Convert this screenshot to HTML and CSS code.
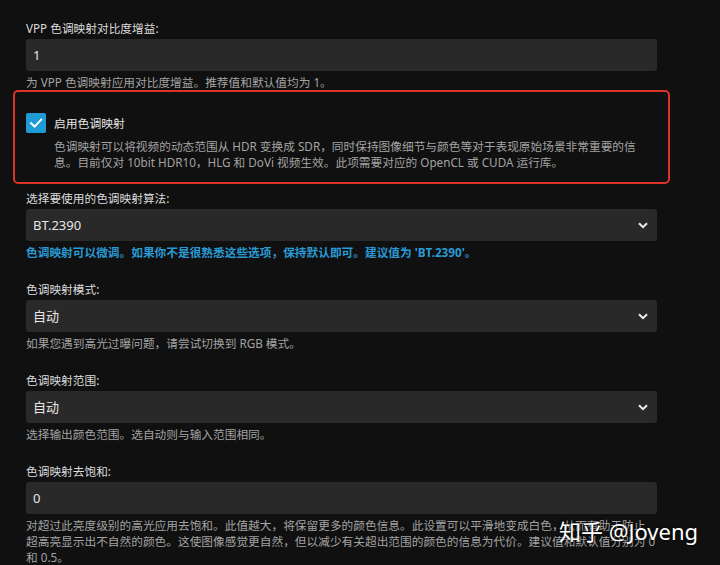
FILE: index.html
```html
<!DOCTYPE html>
<html lang="zh-CN">
<head>
<meta charset="utf-8">
<title>色调映射设置</title>
<link rel="stylesheet" href="styles.css">
</head>
<body>
<div class="page">
  <div class="field">
    <label class="label">VPP 色调映射对比度增益:</label>
    <div class="control">1</div>
    <div class="help">为 VPP 色调映射应用对比度增益。推荐值和默认值均为 1。</div>
  </div>

  <div class="highlight">
    <div class="check-row">
      <span class="checkbox">
        <svg viewBox="0 0 20 20" width="20" height="20"><path d="M5 10.2 L8.6 13.6 L15.2 6.6" fill="none" stroke="#fff" stroke-width="2" stroke-linecap="square"/></svg>
      </span>
      <span class="check-label">启用色调映射</span>
    </div>
    <div class="check-desc">色调映射可以将视频的动态范围从 HDR 变换成 SDR，同时保持图像细节与颜色等对于表现原始场景非常重要的信息。目前仅对 10bit HDR10，HLG 和 DoVi 视频生效。此项需要对应的 OpenCL 或 CUDA 运行库。</div>
  </div>

  <div class="field field-after-box">
    <label class="label">选择要使用的色调映射算法:</label>
    <div class="control select">BT.2390<svg class="chev" viewBox="0 0 10 7" width="10" height="7"><path d="M1 1.2 L5 5.2 L9 1.2" fill="none" stroke="#ececec" stroke-width="2"/></svg></div>
    <div class="help help-blue">色调映射可以微调。如果你不是很熟悉这些选项，保持默认即可。建议值为 'BT.2390'。</div>
  </div>

  <div class="field">
    <label class="label">色调映射模式:</label>
    <div class="control select">自动<svg class="chev" viewBox="0 0 10 7" width="10" height="7"><path d="M1 1.2 L5 5.2 L9 1.2" fill="none" stroke="#ececec" stroke-width="2"/></svg></div>
    <div class="help">如果您遇到高光过曝问题，请尝试切换到 RGB 模式。</div>
  </div>

  <div class="field">
    <label class="label">色调映射范围:</label>
    <div class="control select">自动<svg class="chev" viewBox="0 0 10 7" width="10" height="7"><path d="M1 1.2 L5 5.2 L9 1.2" fill="none" stroke="#ececec" stroke-width="2"/></svg></div>
    <div class="help">选择输出颜色范围。选自动则与输入范围相同。</div>
  </div>

  <div class="field">
    <label class="label">色调映射去饱和:</label>
    <div class="control">0</div>
    <div class="help">对超过此亮度级别的高光应用去饱和。此值越大，将保留更多的颜色信息。此设置可以平滑地变成白色，从而有助于防止超高亮显示出不自然的颜色。这使图像感觉更自然，但以减少有关超出范围的颜色的信息为代价。建议值和默认值分别为 0 和 0.5。</div>
  </div>
</div>
<div class="watermark">知乎 @Joveng</div>
</body>
</html>
```
FILE: styles.css
```css
html, body {
  margin: 0;
  padding: 0;
  background: #101010;
}
body {
  width: 720px;
  height: 565px;
  overflow: hidden;
  position: relative;
  font-family: "Noto Sans", "Noto Sans CJK SC", sans-serif;
  font-size: 11.7px;
  line-height: 16px;
  color: #e0e0e0;
}
.page {
  width: 631px;
  padding: 20px 0 0 26px;
}
.field {
  display: flex;
  flex-direction: column;
  margin-bottom: 21px;
}
.field:first-child {
  margin-bottom: 0;
}
.field-after-box {
  margin-top: 6px;
}
.label {
  display: block;
  color: #dcdcdc;
  margin-bottom: 3px;
}
.control {
  height: 32px;
  box-sizing: border-box;
  background: #292929;
  border-radius: 3px;
  padding: 0 9px 0 7px;
  display: flex;
  align-items: center;
  justify-content: space-between;
  font-size: 13px;
  color: #e6e6e6;
}
.chev {
  display: block;
}
.help {
  margin-top: 3px;
  color: #a3a3a3;
}
.help-blue {
  color: #2a9ad4;
  font-weight: bold;
}
.highlight {
  margin: 0 -13px;
  padding: 21px 11px 12px;
  border: 2px solid #dc3328;
  border-radius: 5px;
}
.check-row {
  display: flex;
  align-items: center;
  gap: 8px;
  height: 20px;
}
.checkbox {
  width: 20px;
  height: 20px;
  border-radius: 2px;
  background: #1f9bd6;
  display: flex;
}
.check-label {
  font-size: 11.8px;
  color: #e6e6e6;
}
.check-desc {
  margin-top: 5px;
  padding-left: 28px;
  color: #a3a3a3;
}
.watermark {
  position: absolute;
  left: 559px;
  top: 516px;
  font-size: 22px;
  line-height: 30px;
  color: #ffffff;
  text-shadow: 0 0 3px rgba(0,0,0,0.8);
  font-family: "Noto Sans", "Noto Sans CJK SC", sans-serif;
}
```
